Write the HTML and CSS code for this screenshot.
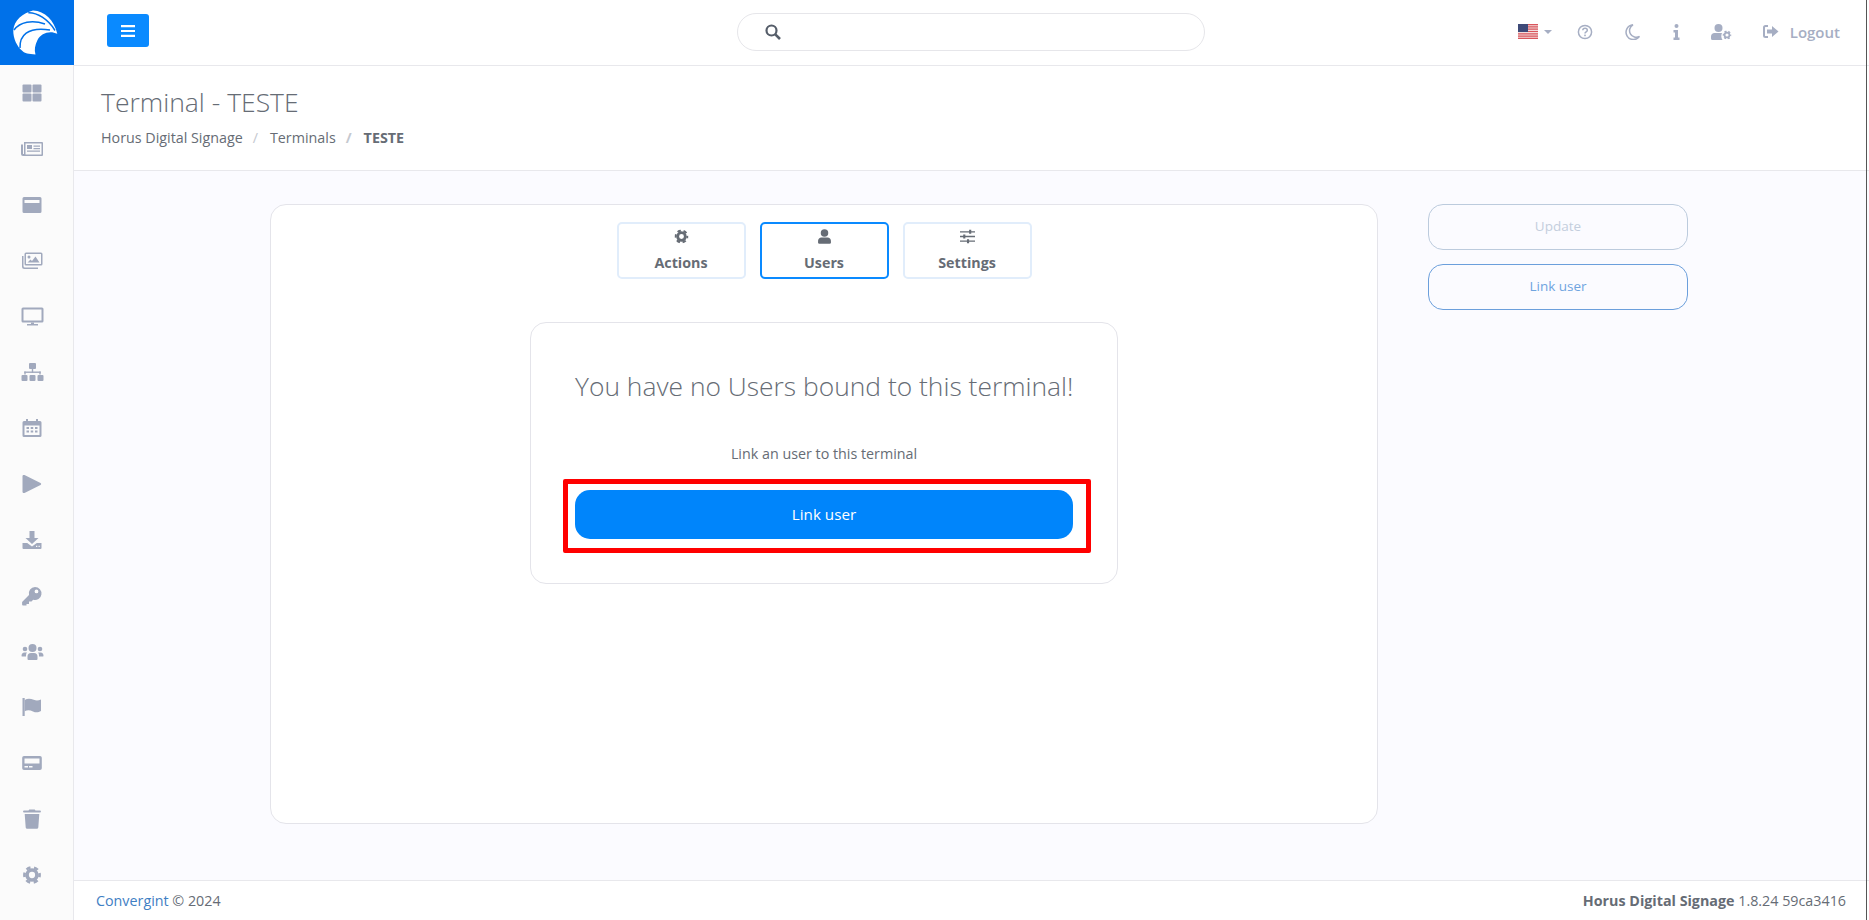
FILE: index.html
```html
<!DOCTYPE html>
<html lang="en">

<head>
    <meta charset="UTF-8">
    <meta name="viewport" content="width=device-width, initial-scale=1.0">
    <title>Terminal - TESTE</title>
    <link rel="stylesheet" href="styles.css">
</head>

<body>
    <svg class="sprites" aria-hidden="true">
        <symbol id="cog" viewBox="1.500 1.500 19 19">
            <circle cx="11" cy="11" r="5.200" fill="none" stroke="currentColor" stroke-width="3.800" />
            <circle cx="11" cy="11" r="8" fill="none" stroke="currentColor" stroke-width="2.800" stroke-dasharray="4.600 3.780" stroke-dashoffset="2.300" />
        </symbol>
    </svg>

    <aside class="sidebar">
        <div class="brand">
            <svg class="brand-logo" width="46" height="46" viewBox="0 0 46 46">
                <path fill="#fff" d="M21 .5C33 1 42 10 45.300 23.800 38 20 29 23 25.500 30 23 35 22 40 23.500 44.500 17 44 12 43 11 41.500 5 37 1 28 1.300 20.500 2 10 11 3 21 .5Z" />
                <path fill="none" stroke="#0071e9" stroke-width="1.500" d="M16.300 2.800C25 2.500 36 9 43 20.500M2 20C8 12 20 9.500 33 14M8 38C7.500 26 15 16.500 38 20" />
            </svg>
        </div>
        <nav class="side-nav">
            <a class="side-item" href="#"><svg width="22" height="22" viewBox="0 0 22 22"><rect x="1.500" y="2.500" width="9" height="8" rx="1" /><rect x="11.500" y="2.500" width="9" height="8" rx="1" /><rect x="1.500" y="11.500" width="9" height="8" rx="1" /><rect x="11.500" y="11.500" width="9" height="8" rx="1" /></svg></a>
            <a class="side-item" href="#"><svg width="22" height="22" viewBox="0 0 22 22"><path d="M3 4h18a1 1 0 0 1 1 1v12a1 1 0 0 1-1 1H2a2 2 0 0 1-2-2V6.500h2V16h1ZM4.500 5.500V16.500h16V5.500Z" fill-rule="evenodd" /><path d="M6 7h5v4H6ZM12.500 7.500h6.500v1.200h-6.500ZM12.500 10h6.500v1.200h-6.500ZM6 12.500h13v1.200H6Z" /></svg></a>
            <a class="side-item" href="#"><svg width="22" height="22" viewBox="0 0 22 22"><path fill-rule="evenodd" d="M3 3h16a1.500 1.500 0 0 1 1.500 1.500v13A1.500 1.500 0 0 1 19 19H3a1.500 1.500 0 0 1-1.500-1.500v-13A1.500 1.500 0 0 1 3 3ZM3.500 6v3h15V6Z" /></svg></a>
            <a class="side-item" href="#"><svg width="22" height="22" viewBox="0 0 22 22"><path d="M5 3.500h15a1.500 1.500 0 0 1 1.500 1.500v10a1.500 1.500 0 0 1-1.500 1.500H5A1.500 1.500 0 0 1 3.500 15V5A1.500 1.500 0 0 1 5 3.500ZM5 5v10h15V5Z" fill-rule="evenodd" /><path d="M1 7h1.500v10a1.500 1.500 0 0 0 1.500 1.500h13V20H3.500A2.500 2.500 0 0 1 1 17.500ZM6.500 13.500l3-3 1.500 1.500 3.500-4.500 4 6ZM8 6.500a1.500 1.500 0 1 1 0 3 1.500 1.500 0 0 1 0-3Z" /></svg></a>
            <a class="side-item" href="#"><svg width="23" height="22" viewBox="0 0 23 22"><path fill-rule="evenodd" d="M2 2.500h19a1.500 1.500 0 0 1 1.500 1.500v12a1.500 1.500 0 0 1-1.500 1.500H2A1.500 1.500 0 0 1 .5 16V4A1.500 1.500 0 0 1 2 2.500ZM2.500 4.500v11h18v-11Z" /><path d="M10 17.500h3v1.500h4v1.500H6V19h4Z" /></svg></a>
            <a class="side-item" href="#"><svg width="23" height="22" viewBox="0 0 23 22"><rect x="8" y="2" width="7" height="6" rx="1" /><rect x="10.800" y="8" width="1.400" height="4" /><rect x="3.300" y="10.500" width="16.400" height="1.400" /><rect x="3.300" y="10.500" width="1.400" height="3" /><rect x="18.300" y="10.500" width="1.400" height="3" /><rect x=".5" y="14" width="6" height="6" rx="1" /><rect x="8.500" y="14" width="6" height="6" rx="1" /><rect x="16.500" y="14" width="6" height="6" rx="1" /></svg></a>
            <a class="side-item" href="#"><svg width="22" height="22" viewBox="0 0 22 22"><path fill-rule="evenodd" d="M5 2h2v2h8V2h2v2h2a1.500 1.500 0 0 1 1.500 1.500v13A1.500 1.500 0 0 1 19 20H3a1.500 1.500 0 0 1-1.500-1.500v-13A1.500 1.500 0 0 1 3 4h2ZM3.500 8.500v9.500h15V8.500Z" /><path d="M5.500 10h2.500v2H5.500ZM9.700 10h2.500v2H9.700ZM14 10h2.500v2H14ZM5.500 13.500h2.500v2H5.500ZM9.700 13.500h2.500v2H9.700ZM14 13.500h2.500v2H14Z" /></svg></a>
            <a class="side-item" href="#"><svg width="22" height="22" viewBox="0 0 22 22"><path d="M1.500 3.200C1.500 2 2.600 1.600 3.500 2.100L19.500 10c.9.500.9 1.500 0 2L3.500 19.900c-.9.500-2 .1-2-1.100Z" /></svg></a>
            <a class="side-item" href="#"><svg width="22" height="22" viewBox="0 0 22 22"><path d="M8.500 2h5v7h4l-6.500 6-6.500-6h4Z" /><path fill-rule="evenodd" d="M1.500 14h4.700l4.800 3.500 4.800-3.500h4.700v5a1 1 0 0 1-1 1h-17a1 1 0 0 1-1-1ZM15 16.800v1.200h1.300v-1.200ZM17.500 16.800v1.200h1.300v-1.200Z" /></svg></a>
            <a class="side-item" href="#"><svg width="22" height="22" viewBox="0 0 22 22"><path fill-rule="evenodd" d="M14 2a6.500 6.500 0 1 1-1.800 12.750L10.500 16.500H8v2.500H5.500v1.500H2a.9.9 0 0 1-.9-.9v-2.500L8 10.100A6.500 6.500 0 0 1 14 2ZM15.500 4.500a1.900 1.900 0 1 0 0 3.800 1.900 1.900 0 0 0 0-3.800Z" /></svg></a>
            <a class="side-item" href="#"><svg width="23" height="22" viewBox="0 0 23 22"><circle cx="11.500" cy="8" r="4" /><circle cx="4" cy="9" r="2.300" /><circle cx="19" cy="9" r="2.300" /><path d="M6.500 19v-2.500A3.500 3.500 0 0 1 10 13h3a3.500 3.500 0 0 1 3.500 3.500V19a1 1 0 0 1-1 1h-8a1 1 0 0 1-1-1ZM.5 16c0-2 1-3.500 3-3.500H6C5 13.500 5 15 5 16.500H1.500a1 1 0 0 1-1-.5ZM22.500 16c0-2-1-3.500-3-3.500H17c1 1 1 2.500 1 4h3.500a1 1 0 0 0 1-.5Z" /></svg></a>
            <a class="side-item" href="#"><svg width="22" height="22" viewBox="0 0 22 22"><path d="M1.500 2h2.200v18H1.500Z" /><path d="M3.700 4c3-2 6-1.500 9-.2 2.500 1 4.500 1 7.300-.3v11.500c-3 1.800-5.500 1.500-8 .4-3-1.300-5.600-1.600-8.300-.2Z" /></svg></a>
            <a class="side-item" href="#"><svg width="22" height="22" viewBox="0 0 22 22"><path fill-rule="evenodd" d="M3 4h16a1.800 1.800 0 0 1 1.800 1.800v10.400A1.800 1.800 0 0 1 19 18H3a1.800 1.800 0 0 1-1.800-1.800V5.800A1.800 1.800 0 0 1 3 4ZM3.500 6.500v5h15v-5ZM3.500 14v1.500h3.500V14ZM8 14v1.500h3.500V14Z" /></svg></a>
            <a class="side-item" href="#"><svg width="22" height="22" viewBox="0 0 22 22"><path d="M7.500 2.500 8.300 1.500h5.400l.8 1H19a.9.900 0 0 1 0 1.900H3a.9.900 0 0 1 0-1.900ZM3.700 6h14.600l-1 13.500a1.500 1.500 0 0 1-1.500 1.300H6.200a1.500 1.500 0 0 1-1.500-1.300Z" /></svg></a>
            <a class="side-item side-cog" href="#"><svg width="18" height="18"><use href="#cog" /></svg></a>
        </nav>
    </aside>

    <div class="page">
        <header class="topbar">
            <div class="topbar-left">
                <button class="toggle-btn" type="button">
                    <svg width="14" height="14" viewBox="0 0 14 14"><path d="M0 1h14v2.200H0ZM0 5.900h14v2.200H0ZM0 10.800h14v2.200H0Z" fill="#fff" /></svg>
                </button>
            </div>
            <div class="search">
                <svg width="16" height="16" viewBox="0 0 16 16"><circle cx="6.500" cy="6.500" r="5" fill="none" stroke="#555d69" stroke-width="2.200" /><path d="M10.300 10.300 15 15" stroke="#555d69" stroke-width="2.600" /></svg>
            </div>
            <div class="top-actions">
                <span class="lang">
                    <svg class="flag" width="20" height="15" viewBox="0 0 20 15">
                        <rect width="20" height="15" fill="#f3dcdc" />
                        <path d="M0 0h20v1.200H0ZM0 2.300h20v1.200H0ZM0 4.600h20v1.200H0ZM0 6.900h20v1.200H0ZM0 9.200h20v1.200H0ZM0 11.500h20v1.200H0ZM0 13.800h20V15H0Z" fill="#d9565c" />
                        <rect width="10" height="8" fill="#3e4a78" />
                    </svg>
                    <i class="caret"></i>
                </span>
                <svg class="top-icon" width="16" height="16" viewBox="0 0 16 16"><circle cx="8" cy="8" r="6.600" fill="none" stroke="currentColor" stroke-width="1.500" /><path d="M5.800 6.200C5.900 3.800 10.200 3.700 10.300 6.200 10.300 8 8 7.800 8 9.600" fill="none" stroke="currentColor" stroke-width="1.500" /><rect x="7.200" y="10.600" width="1.600" height="1.600" fill="currentColor" /></svg>
                <svg class="top-icon moon" width="16" height="16" viewBox="0 0 16 16"><path d="M9 .8A7.400 7.400 0 1 0 15.500 12.500 6.300 6.300 0 0 1 9 .8Z" fill="none" stroke="currentColor" stroke-width="1.500" /></svg>
                <svg class="top-icon" width="7" height="16" viewBox="0 0 7 16"><circle cx="3.500" cy="2" r="2" fill="currentColor" /><path d="M.5 6h4.500v7.500h1.500V16H.5v-2.500H2V8.500H.5Z" fill="currentColor" /></svg>
                <svg class="top-icon" width="21" height="16" viewBox="0 0 21 16"><circle cx="7.500" cy="4" r="4" fill="currentColor" /><path d="M0 14.500V12.500C0 10.500 1.500 9 3.500 9h7.500c-1 2-1 5 .5 7H1.500A1.500 1.500 0 0 1 0 14.500Z" fill="currentColor" /><use href="#cog" x="11.500" y="6.500" width="9" height="9" /></svg>
                <a class="logout" href="#">
                    <svg width="16" height="13" viewBox="0 0 16 13"><path d="M5 1H2.500A1.500 1.500 0 0 0 1 2.500v8A1.500 1.500 0 0 0 2.500 12H5" fill="none" stroke="currentColor" stroke-width="2" /><path d="M4 4.500h5V1l6.500 5.500L9 12V8.500H4Z" fill="currentColor" /></svg>
                    Logout
                </a>
            </div>
        </header>

        <section class="page-head">
            <h1>Terminal - TESTE</h1>
            <ol class="crumbs">
                <li>Horus Digital Signage</li>
                <li>Terminals</li>
                <li class="current">TESTE</li>
            </ol>
        </section>

        <main class="content">
            <div class="card">
                <div class="tabs">
                    <button class="tab" type="button">
                        <svg width="15" height="15"><use href="#cog" width="14" height="14" x=".5" y=".5" /></svg>
                        Actions
                    </button>
                    <button class="tab active" type="button">
                        <svg width="15" height="15" viewBox="0 0 14 14"><circle cx="7" cy="3.700" r="3.500" fill="currentColor" /><path d="M1 12.500V11c0-1.800 1.500-3 3-3h6c1.500 0 3 1.200 3 3v1.500a1.200 1.200 0 0 1-1.200 1.200H2.200A1.200 1.200 0 0 1 1 12.500Z" fill="currentColor" /></svg>
                        Users
                    </button>
                    <button class="tab" type="button">
                        <svg width="15" height="15" viewBox="0 0 14 14"><path d="M0 2h14v1.200H0ZM0 6.400h14v1.200H0ZM0 10.800h14V12H0ZM8.500.7h2v3.800h-2ZM3 5.100h2v3.800H3ZM6.500 9.500h2v3.800h-2Z" fill="currentColor" /></svg>
                        Settings
                    </button>
                </div>
                <div class="empty">
                    <h2>You have no Users bound to this terminal!</h2>
                    <p>Link an user to this terminal</p>
                    <button class="btn-primary" type="button">Link user</button>
                    <div class="highlight"></div>
                </div>
            </div>
            <div class="side-actions">
                <button class="btn-outline disabled" type="button">Update</button>
                <button class="btn-outline" type="button">Link user</button>
            </div>
        </main>

        <footer class="footer">
            <span><a href="#">Convergint</a> © 2024</span>
            <span><b>Horus Digital Signage</b> 1.8.24 59ca3416</span>
        </footer>
    </div>

    <div class="window-edge"></div>
</body>

</html>
```

FILE: styles.css
```css
* {
    box-sizing: border-box;
}

html,
body {
    height: 100%;
}

body {
    display: flex;
    margin: 0;
    overflow: hidden;
    font-family: "Open Sans", "Liberation Sans", sans-serif;
    font-size: 14.3px;
    color: #666c75;
    background-color: #fff;
}

a {
    text-decoration: none;
}

button {
    font-family: inherit;
    cursor: pointer;
}

.sprites {
    display: none;
}

/* the thin dark line of the window frame */
.window-edge {
    position: absolute;
    top: 0;
    right: 2px;
    width: 1px;
    height: 100%;
    background-color: #555;
}

/* sidebar */
.sidebar {
    flex: 0 0 74px;
    background-color: #fbfbfb;
    border-right: 1px solid #e8e8ec;
}

.brand {
    display: flex;
    align-items: center;
    height: 65px;
    padding-left: 12px;
    margin-right: -1px;
    background-color: #0071e9;
}

.side-item {
    display: flex;
    align-items: center;
    height: 55.85px;
    padding-left: 21px;
    color: #a1a9bd;
    fill: currentColor;
}

.side-cog {
    padding-left: 23px;
}

/* topbar */
.page {
    display: flex;
    flex: 1;
    flex-direction: column;
    min-width: 0;
}

.topbar {
    display: grid;
    grid-template-columns: 1fr 468px 1fr;
    align-items: center;
    height: 66px;
    border-bottom: 1px solid #e8e8ec;
}

.topbar-left {
    padding-left: 33px;
}

.toggle-btn {
    display: flex;
    align-items: center;
    justify-content: center;
    width: 42px;
    height: 33px;
    padding: 0;
    margin-top: -4px;
    background-color: #0a8aff;
    border: none;
    border-radius: 3px;
}

.search {
    display: flex;
    align-items: center;
    height: 38px;
    padding-left: 27px;
    margin: -2px 1px 0 -1px;
    border: 1px solid #e6e6ea;
    border-radius: 19px;
}

.top-actions {
    display: flex;
    align-items: center;
    justify-content: flex-end;
    gap: 31px;
    padding-right: 29px;
    margin-top: -2px;
    color: #a6aec3;
}

.moon {
    margin-right: 2px;
}

.lang {
    display: flex;
    align-items: center;
    gap: 6px;
    margin-right: -6px;
}

.flag {
    display: block;
}

.caret {
    width: 0;
    height: 0;
    border-top: 4px solid #a6aec3;
    border-right: 4px solid transparent;
    border-left: 4px solid transparent;
}

.logout {
    display: flex;
    align-items: center;
    gap: 11px;
    font-size: 15px;
    font-weight: 600;
    color: #a6aec3;
}

/* title */
.page-head {
    height: 105px;
    padding: 18px 27px 0;
    border-bottom: 1px solid #e8e8ec;
}

.page-head h1 {
    margin: 0;
    font-size: 26.5px;
    font-weight: 300;
    line-height: 36px;
    color: #666c75;
}

.crumbs {
    display: flex;
    padding: 0;
    margin: 8px 0 0;
    list-style: none;
    line-height: 19px;
}

.crumbs li + li::before {
    content: "/";
    padding: 0 12px 0 10px;
    color: #c5c9d0;
}

.crumbs .current {
    font-weight: 700;
}

/* content */
.content {
    display: flex;
    flex: 1;
    align-items: flex-start;
    gap: 50px;
    padding: 33px 0 0 196px;
    background-color: #fbfbff;
}

.card {
    width: 1108px;
    height: 620px;
    padding-top: 17px;
    background-color: #fff;
    border: 1px solid #e4e4ea;
    border-radius: 16px;
}

.tabs {
    display: flex;
    justify-content: center;
    gap: 14px;
}

.tab {
    display: flex;
    flex-direction: column;
    align-items: center;
    gap: 9px;
    width: 129px;
    height: 57px;
    padding: 5px 0 0;
    font-size: 14.3px;
    font-weight: 700;
    line-height: 19px;
    color: #666c75;
    background-color: #fff;
    border: 2px solid #e1edfb;
    border-radius: 5px;
}

.tab.active {
    border-color: #0a8aff;
}

.empty {
    position: relative;
    width: 588px;
    height: 262px;
    padding: 43px 44px 0;
    margin: 43px auto 0;
    text-align: center;
    border: 1px solid #e4e4ea;
    border-radius: 16px;
}

.empty h2 {
    margin: 0;
    font-size: 26.4px;
    font-weight: 300;
    line-height: 40px;
    white-space: nowrap;
    color: #666c75;
}

.empty p {
    margin: 38px 0 0;
    line-height: 20px;
}

.btn-primary {
    display: block;
    width: 498px;
    height: 49px;
    padding-bottom: 3px;
    margin-top: 26px;
    font-size: 15.2px;
    color: #fff;
    background-color: #0085fb;
    border: none;
    border-radius: 15px;
}

.highlight {
    position: absolute;
    top: 156px;
    left: 32px;
    width: 528px;
    height: 74px;
    border: 5px solid #f00;
    border-radius: 2px;
}

.side-actions {
    display: flex;
    flex-direction: column;
    gap: 14px;
    width: 260px;
}

.btn-outline {
    height: 46px;
    padding-bottom: 4px;
    font-size: 13.5px;
    color: #6fa4df;
    background-color: transparent;
    border: 1px solid #6b9fdc;
    border-radius: 15px;
}

.btn-outline.disabled {
    color: #c3cedd;
    border-color: #bccbdd;
}

/* footer */
.footer {
    display: flex;
    align-items: center;
    justify-content: space-between;
    height: 40px;
    padding: 0 23px 0 22px;
    line-height: 19px;
    background-color: #fff;
    border-top: 1px solid #e8e8ec;
}

.footer a {
    color: #3f80c4;
}

.footer b {
    font-weight: 700;
}
```
